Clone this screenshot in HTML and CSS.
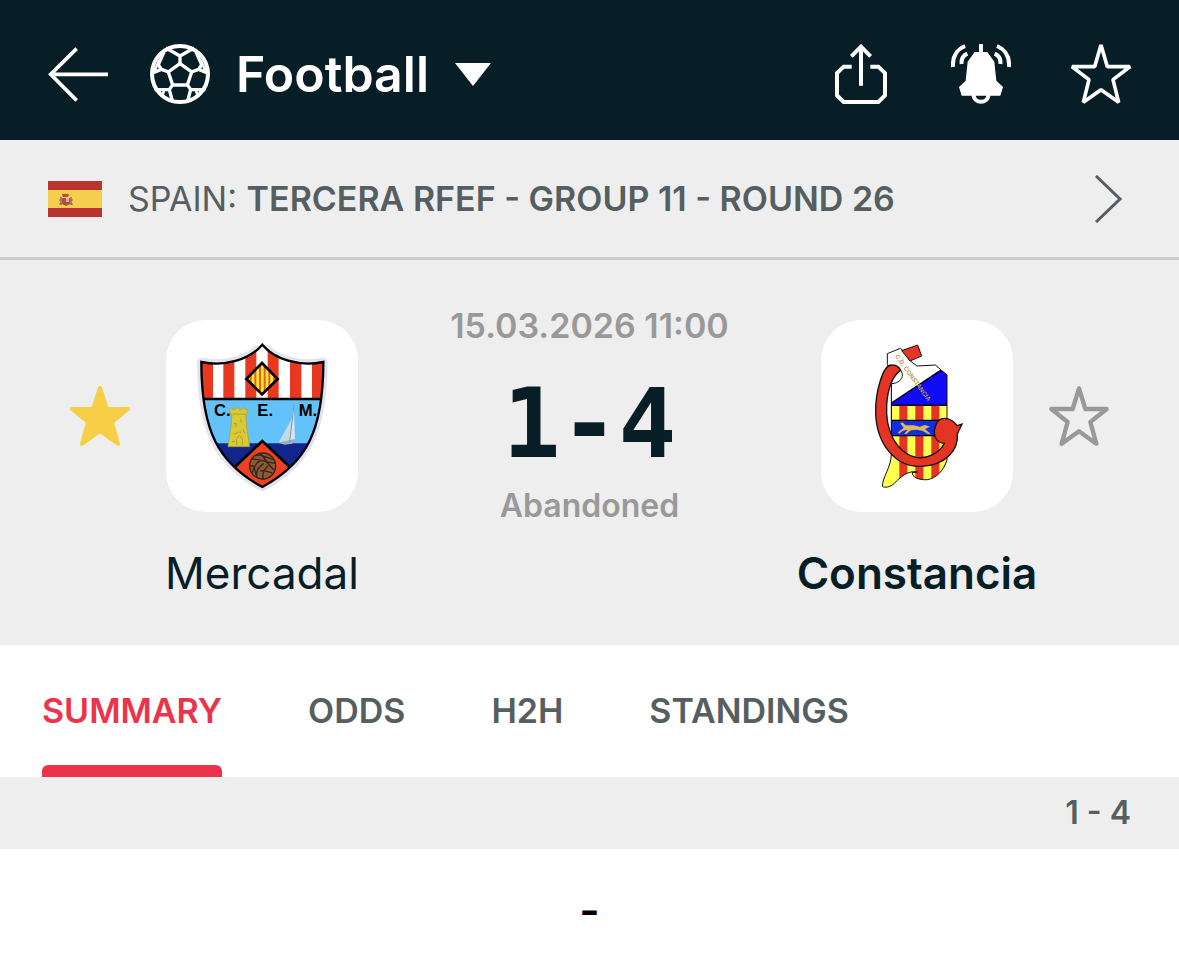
FILE: index.html
```html
<!DOCTYPE html>
<html lang="en">
<head>
    <meta charset="UTF-8">
    <meta name="viewport" content="width=device-width, initial-scale=1">
    <title>Mercadal - Constancia</title>
    <link rel="stylesheet" href="styles.css">
</head>
<body>
<header class="topbar">
    <button type="button" class="icon-btn" aria-label="Back">
        <svg viewBox="54 42 180 180" fill="none" stroke="#fff" stroke-width="11"><path d="M140 56L62 133L140 211M62 133H234"/></svg>
    </button>
    <div class="sport">
        <svg class="ball" viewBox="360 42 180 180" fill="none" stroke="#fff" stroke-width="10" aria-hidden="true">
            <circle cx="450" cy="132" r="84" stroke-width="12"/>
            <path d="M450 101L485 126L472 165H428L415 126Z"/>
            <path d="M450 103V78M408 54L450 78L492 54M484 126L506 118L536 130M506 118L515 104L498 66M472 164L482 179H526M482 179L472 216M428 164L418 179H374M418 179L428 216M416 126L394 118L364 130M394 118L385 104L402 66"/>
            <path d="M512 90L526 122M388 90L374 122M498 182L505 202M402 182L395 202" stroke-width="8"/>
        </svg>
        <select class="sport-select" aria-label="Sport">
            <option>Football</option>
        </select>
        <svg class="caret" viewBox="0 0 36 23" fill="#fff" aria-hidden="true"><path d="M0 0H36L18 23Z"/></svg>
    </div>
    <div class="actions">
        <button type="button" class="icon-btn" aria-label="Share">
            <svg viewBox="33 42 180 180" fill="none" stroke="#fff" stroke-width="12"><path d="M123 167V52M94 79L123 50L152 79M95 110H71L51 129V196L71 216H175L195 196V129L175 110H151"/></svg>
        </button>
        <button type="button" class="icon-btn" aria-label="Notifications">
            <svg viewBox="393 42 180 180" fill="none" stroke="#fff" stroke-width="12">
                <path d="M483 42V70"/>
                <path d="M464 66H502L523 95L529 152L549 171L541 197H425L417 171L437 152L443 95Z" fill="#fff" stroke="none"/>
                <path d="M461 194C461 222 505 222 505 194"/>
                <path d="M399 111C397 80 411 58 435 48M425 102C423 87 429 77 442 71M567 111C569 80 555 58 531 48M541 102C543 87 537 77 524 71"/>
            </svg>
        </button>
        <button type="button" class="icon-btn" aria-label="Add match to favourites">
            <svg viewBox="753 42 180 180" fill="none" stroke="#fff" stroke-width="11" stroke-linejoin="bevel"><path d="M843 45L862 110H930L879 149L896 217L843 179L790 217L807 149L756 110H824Z"/></svg>
        </button>
    </div>
</header>

<a href="#" class="league">
    <svg class="flag" viewBox="0 0 54 36" aria-hidden="true">
        <rect width="54" height="36" fill="#b93431"/>
        <rect y="9" width="54" height="18" fill="#f5ce50"/>
        <path d="M12 16H14V24H12ZM22 16H24V24H22Z" fill="#a98275"/>
        <path d="M14 13H21L20 16H15ZM14 17H22V23L18 25L14 23Z" fill="#b94d35"/>
        <path d="M18 17H21V21H18Z" fill="#d8b3a5"/>
        <path d="M11 19H15M21 19H25M11 23H14M22 23H25" stroke="#b05b3a"/>
    </svg>
    <span class="league-name">SPAIN: <b>TERCERA RFEF - GROUP 11 - ROUND 26</b></span>
    <svg class="chevron" viewBox="0 0 28 48" fill="none" stroke="#555e61" stroke-width="3" aria-hidden="true"><path d="M1 1L25 24L1 47"/></svg>
</a>

<main>
    <section class="match">
        <button type="button" class="fav" aria-label="Remove Mercadal from favourites">
            <svg viewBox="0 0 60 60" fill="#f7cf47" stroke="#f7cf47" stroke-width="4" stroke-linejoin="round"><path d="M30 2L37 23H58L42 36L48 58L30 45L12 58L18 36L2 23H23Z"/></svg>
        </button>
        <div class="team">
            <div class="crest">
                <svg viewBox="18 30 576 576" role="img" aria-label="Mercadal crest">
                    <defs>
                        <clipPath id="shield"><path d="M307 104C270 148 198 171 124 156C124 365 176 460 307 531C438 460 490 365 490 156C416 171 344 148 307 104Z"/></clipPath>
                        <clipPath id="diamond"><path d="M306 159L353 207L306 253L259 207Z"/></clipPath>
                    </defs>
                    <path d="M307 104C270 148 198 171 124 156C124 365 176 460 307 531C438 460 490 365 490 156C416 171 344 148 307 104Z" fill="#e2e3ee" stroke="#e2e3ee" stroke-width="26" stroke-linejoin="round"/>
                    <path d="M270 106L307 90L344 106Z" fill="#fff"/>
                    <g clip-path="url(#shield)">
                        <path d="M110 90H500V268H110Z" fill="#fff"/>
                        <path d="M120 90H159V268H120ZM190 90H223V268H190ZM256 90H289V268H256ZM323 90H356V268H323ZM390 90H424V268H390ZM456 90H500V268H456Z" fill="#e93820"/>
                        <path d="M110 268H500V402H110Z" fill="#63c2fa"/>
                        <path d="M110 400H500V540H110Z" fill="#12258d"/>
                        <path d="M120 267H500" stroke="#000" stroke-width="7"/>
                        <path d="M307 393L215 480L307 545L399 480Z" fill="#ea4026" stroke="#000" stroke-width="8"/>
                    </g>
                    <g clip-path="url(#diamond)">
                        <path d="M256 156H356V256H256Z" fill="#f9e83b"/>
                        <path d="M272 150V260M286 150V260M300 150V260M314 150V260M328 150V260M342 150V260" stroke="#e36222" stroke-width="6"/>
                    </g>
                    <path d="M306 159L353 207L306 253L259 207Z" fill="none" stroke="#000" stroke-width="8"/>
                    <path d="M307 104C270 148 198 171 124 156C124 365 176 460 307 531C438 460 490 365 490 156C416 171 344 148 307 104Z" fill="none" stroke="#000" stroke-width="7"/>
                    <path d="M209 295H218V299H226V294H238V299H246V294H256V299H265L261 312H257L260 350L269 410H204L213 350L216 312H211Z" fill="#dac937" stroke="#ab9c2c" stroke-width="2"/>
                    <path d="M219 312H256M222 340H228V352M243 326V337M221 373L236 366M249 358L255 370M230 406V386L238 376L247 386V406M216 394H225M241 364V370" fill="none" stroke="#ad9f2d" stroke-width="3"/>
                    <path d="M401 286L405 388L384 392Z" fill="#dbe3e8"/>
                    <path d="M398 322L356 397L384 392Z" fill="#c2dae7"/>
                    <path d="M354 398L403 388L397 401L374 404Z" fill="#a4adb6"/>
                    <path d="M402 284L389 395" fill="none" stroke="#7395a9" stroke-width="3"/>
                    <circle cx="308" cy="468" r="39" fill="#8a5937" stroke="#372318" stroke-width="4"/>
                    <path d="M275 448C296 443 310 457 345 460M286 436C305 432 322 444 342 449M301 430C314 445 324 464 342 480M276 488C285 462 295 453 304 451M291 503C286 482 299 468 311 461M310 508C305 490 312 478 325 467M270 468C286 463 283 480 289 495M301 483C316 479 330 488 337 489" fill="none" stroke="#38241a" stroke-width="4"/>
                    <g class="crest-letters"><text x="162" y="319">C.</text><text x="292" y="319">E.</text><text x="416" y="319">M.</text></g>
                </svg>
            </div>
            <span class="team-name">Mercadal</span>
        </div>
        <div class="result">
            <time class="date" datetime="2026-03-15T11:00">15.03.2026 11:00</time>
            <strong class="score">1-4</strong>
            <span class="status">Abandoned</span>
        </div>
        <div class="team">
            <div class="crest">
                <svg viewBox="18 30 576 576" role="img" aria-label="Constancia crest">
                    <defs>
                        <clipPath id="body"><path d="M217 131L256 115L270 127L286 153L306 168L361 165L396 195V450C385 484 363 505 337 509C313 511 290 501 292 488L307 486C279 480 255 502 238 520C225 532 209 534 202 529C203 499 229 472 229 430V205L217 160Z"/></clipPath>
                    </defs>
                    <g clip-path="url(#body)">
                        <path d="M195 105H400V540H195Z" fill="#fff"/>
                        <path d="M229 279L377 181L402 195V286H229Z" fill="#100bf4" stroke="#000" stroke-width="4"/>
                        <path d="M229 286H402V540H229Z" fill="#e63324"/>
                        <path d="M229 286H253V540H229ZM277 286H301V540H277ZM325 286H349V540H325ZM373 286H397V540H373Z" fill="#ffff50"/>
                        <path d="M195 430H249V540H195Z" fill="#ffff50"/>
                        <path d="M229 331H402V377H229Z" fill="#142de0"/>
                        <path d="M229 200V430M229 286H402M229 331H402M229 377H402" fill="none" stroke="#000" stroke-width="4"/>
                    </g>
                    <path d="M217 131L256 115L270 127L286 153L306 168L361 165L396 195V450C385 484 363 505 337 509C313 511 290 501 292 488L307 486C279 480 255 502 238 520C225 532 209 534 202 529C203 499 229 472 229 430V205L217 160Z" fill="none" stroke="#111" stroke-width="3"/>
                    <path d="M260 122L308 105L320 138L285 153Z" fill="#e33624" stroke="#111" stroke-width="3"/>
                    <path d="M256 340L262 337L272 346H296L314 350L330 345L345 350L330 357L346 371L340 373L322 362L305 359L288 361L273 373L268 371L278 359L264 362L252 371L249 367L266 354Z" fill="#e0b75c"/>
                    <path d="M230 165C205 163 180 244 182 311C185 403 244 474 320 469C394 466 431 418 427 372L441 342L426 347C406 319 369 316 361 350C351 378 368 400 388 400C374 430 337 446 306 443C241 429 211 358 215 286C218 229 237 193 257 181C252 170 240 165 230 165Z" fill="#e63424" stroke="#111" stroke-width="4"/>
                    <path d="M257 181C272 202 251 221 230 221" fill="none" stroke="#111" stroke-width="3"/>
                    <text class="crest-motto" x="239" y="139" transform="rotate(54 239 139)">C.D. CONSTANCIA</text>
                </svg>
            </div>
            <span class="team-name winner">Constancia</span>
        </div>
        <button type="button" class="fav" aria-label="Add Constancia to favourites">
            <svg viewBox="753 42 180 180" fill="none" stroke="#999" stroke-width="13" stroke-linejoin="round"><path d="M843 49L862 111H926L877 150L895 215L843 178L791 215L809 150L760 111H824Z"/></svg>
        </button>
    </section>

    <nav class="tabs">
        <a href="#" class="tab active">SUMMARY</a>
        <a href="#" class="tab">ODDS</a>
        <a href="#" class="tab">H2H</a>
        <a href="#" class="tab">STANDINGS</a>
    </nav>

    <div class="period">1 - 4</div>
    <p class="empty">-</p>
</main>
</body>
</html>
```
FILE: styles.css
```css
* {
    box-sizing: border-box;
}
body {
    margin: 0;
    background: #fff;
    color: #081e27;
    font-family: Inter, "Liberation Sans", sans-serif;
}
button {
    padding: 0;
    border: 0;
    background: none;
    cursor: pointer;
}
svg {
    display: block;
}
a {
    color: inherit;
    text-decoration: none;
}

/* top bar */
.topbar {
    display: flex;
    align-items: center;
    gap: 42px;
    height: 140px;
    padding: 8px 48px 0;
    background: #081e27;
}
.icon-btn,
.icon-btn svg,
.ball {
    width: 60px;
    height: 60px;
}
.sport {
    display: flex;
    align-items: center;
    gap: 26px;
}
.sport-select {
    appearance: none;
    padding: 0;
    border: 0;
    background: none;
    color: #fff;
    font: 600 50px/60px Inter, "Liberation Sans", sans-serif;
}
.caret {
    width: 36px;
    height: 23px;
}
.actions {
    display: flex;
    gap: 60px;
    margin-left: auto;
}

/* league */
.league {
    display: flex;
    align-items: center;
    gap: 26px;
    height: 120px;
    padding: 0 56px 0 48px;
    border-bottom: 3px solid #ccc;
    background: #eee;
    color: #555e61;
    font-size: 34px;
}
.league b {
    font-weight: 600;
}
.flag {
    width: 54px;
    height: 36px;
}
.chevron {
    width: 28px;
    height: 48px;
    margin-left: auto;
}

/* scoreboard */
.match {
    display: grid;
    grid-template-columns: 60px 240px 1fr 240px 60px;
    column-gap: 12px;
    align-items: start;
    padding: 48px 70px 42px;
    background: #eee;
}
.fav {
    display: flex;
    align-items: center;
    height: 192px;
    margin-top: 12px;
}
.fav svg {
    width: 60px;
    height: 60px;
}
.team {
    display: flex;
    flex-direction: column;
    align-items: center;
    gap: 31px;
    padding-top: 12px;
}
.crest {
    width: 192px;
    height: 192px;
    border-radius: 40px;
    background: #fff;
    overflow: hidden;
}
.crest-letters {
    font: bold 50px "Liberation Sans Narrow", "Liberation Sans", sans-serif;
}
.crest-motto {
    font: bold 19px "Liberation Sans", sans-serif;
    fill: #b49b49;
}
.team-name {
    font-size: 44px;
    line-height: 60px;
}
.winner {
    font-weight: 600;
}
.result {
    display: flex;
    flex-direction: column;
    align-items: center;
}
.date,
.status {
    color: #999;
    font-size: 34px;
    font-weight: 600;
    line-height: 36px;
}
.status {
    font-size: 32px;
}
.score {
    margin-top: 16px;
    font: bold 96px/128px "DejaVu Sans Mono", monospace;
}

/* tabs */
.tabs {
    display: flex;
    gap: 86px;
    height: 132px;
    padding: 0 42px;
    color: #555e61;
    font-size: 34px;
    font-weight: 600;
    line-height: 132px;
}
.active {
    position: relative;
    color: #eb344c;
}
.active::after {
    content: "";
    position: absolute;
    right: 0;
    bottom: 0;
    left: 0;
    height: 12px;
    border-radius: 6px 6px 0 0;
    background: #eb344c;
}

.period {
    padding: 0 48px;
    background: #eee;
    color: #555e61;
    font-size: 32px;
    font-weight: 600;
    line-height: 72px;
    text-align: right;
}
.empty {
    margin: 0;
    color: #000;
    font-size: 44px;
    font-weight: 600;
    line-height: 122px;
    text-align: center;
}
```
